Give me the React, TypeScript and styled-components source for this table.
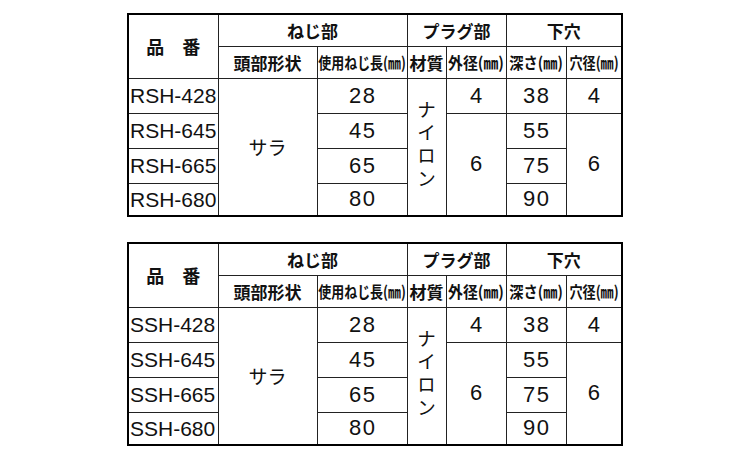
import React from "react";
import styled, { createGlobalStyle } from "styled-components";

const Global = createGlobalStyle`
  html, body { margin: 0; padding: 0; background: #fff; }
  body { font-family: "Liberation Sans", "Noto Sans CJK JP", sans-serif; color: #111; }
`;

const Page = styled.div`
  width: 750px;
  height: 450px;
  display: flex;
  flex-direction: column;
  align-items: center;
  padding-top: 13px;
  gap: 25px;
  box-sizing: border-box;
`;

const Table = styled.table`
  border-collapse: collapse;
  border: 2px solid #000;
  table-layout: fixed;
  width: 494px;
  background: #fff;
`;

const Col = styled.col<{ $w: number }>`
  width: ${(p) => p.$w}px;
`;

const HeadRow = styled.tr`
  height: 32px;
`;

const DataRow = styled.tr<{ $h: number }>`
  height: ${(p) => p.$h}px;
`;

const Head = styled.th<{ $size?: number }>`
  border: 1px solid #222;
  padding: 0;
  font-family: "Noto Sans CJK JP", "Liberation Sans", sans-serif;
  font-weight: 700;
  font-size: ${(p) => p.$size ?? 17}px;
  line-height: 1;
  text-align: center;
  white-space: nowrap;
`;

const Fit = styled.div`
  display: flex;
  justify-content: center;
  width: 100%;
`;

const Squeeze = styled.span<{ $scale: number }>`
  display: inline-block;
  flex: none;
  transform: scaleX(${(p) => p.$scale});
  transform-origin: center;
`;

const Cell = styled.td<{ $left?: boolean }>`
  border: 1px solid #222;
  padding: 0 0 0 ${(p) => (p.$left ? "1px" : "0")};
  font-family: "Liberation Sans", "Noto Sans CJK JP", sans-serif;
  font-size: ${(p) => (p.$left ? 21 : 22)}px;
  line-height: 1;
  text-align: ${(p) => (p.$left ? "left" : "center")};
  white-space: nowrap;
  letter-spacing: ${(p) => (p.$left ? "0" : "1.5px")};
  text-indent: ${(p) => (p.$left ? "0" : "1.5px")};
`;

const JpCell = styled(Cell)`
  font-family: "Noto Sans CJK JP", sans-serif;
  font-size: 19px;
  letter-spacing: 0;
  text-indent: 0;
`;

const Vertical = styled.div`
  display: inline-block;
  writing-mode: vertical-rl;
  text-orientation: upright;
  font-family: "Noto Sans CJK JP", sans-serif;
  font-size: 19px;
  letter-spacing: 4px;
  line-height: 1;
  text-indent: 0;
`;

type Row = { code: string; len: string; depth: string };

const Label: React.FC<{ scale: number; children: React.ReactNode }> = ({ scale, children }) => (
  <Fit>
    <Squeeze $scale={scale}>{children}</Squeeze>
  </Fit>
);

const ProductTable: React.FC<{ prefix: string }> = ({ prefix }) => {
  const rows: Row[] = [
    { code: `${prefix}-428`, len: "28", depth: "38" },
    { code: `${prefix}-645`, len: "45", depth: "55" },
    { code: `${prefix}-665`, len: "65", depth: "75" },
    { code: `${prefix}-680`, len: "80", depth: "90" },
  ];
  const heights = [35, 35, 35, 33];
  return (
    <Table>
      <colgroup>
        <Col $w={90} />
        <Col $w={99} />
        <Col $w={90} />
        <Col $w={39} />
        <Col $w={60} />
        <Col $w={60} />
        <Col $w={56} />
      </colgroup>
      <tbody>
        <HeadRow>
          <Head rowSpan={2} $size={18}>品　番</Head>
          <Head colSpan={2}>ねじ部</Head>
          <Head colSpan={2}>プラグ部</Head>
          <Head colSpan={2}>下穴</Head>
        </HeadRow>
        <HeadRow>
          <Head $size={17}>頭部形状</Head>
          <Head $size={16}>
            <Label scale={0.81}>使用ねじ長(㎜)</Label>
          </Head>
          <Head $size={17}>材質</Head>
          <Head $size={16}>
            <Label scale={0.93}>外径(㎜)</Label>
          </Head>
          <Head $size={16}>
            <Label scale={0.89}>深さ(㎜)</Label>
          </Head>
          <Head $size={16}>
            <Label scale={0.82}>穴径(㎜)</Label>
          </Head>
        </HeadRow>
        {rows.map((r, i) => (
          <DataRow key={r.code} $h={heights[i]}>
            <Cell $left>{r.code}</Cell>
            {i === 0 && <JpCell rowSpan={4}>サラ</JpCell>}
            <Cell>{r.len}</Cell>
            {i === 0 && (
              <JpCell rowSpan={4}>
                <Vertical>ナイロン</Vertical>
              </JpCell>
            )}
            {i === 0 && <Cell>4</Cell>}
            {i === 1 && <Cell rowSpan={3}>6</Cell>}
            <Cell>{r.depth}</Cell>
            {i === 0 && <Cell>4</Cell>}
            {i === 1 && <Cell rowSpan={3}>6</Cell>}
          </DataRow>
        ))}
      </tbody>
    </Table>
  );
};

export default function App() {
  return (
    <>
      <Global />
      <Page>
        <ProductTable prefix="RSH" />
        <ProductTable prefix="SSH" />
      </Page>
    </>
  );
}
